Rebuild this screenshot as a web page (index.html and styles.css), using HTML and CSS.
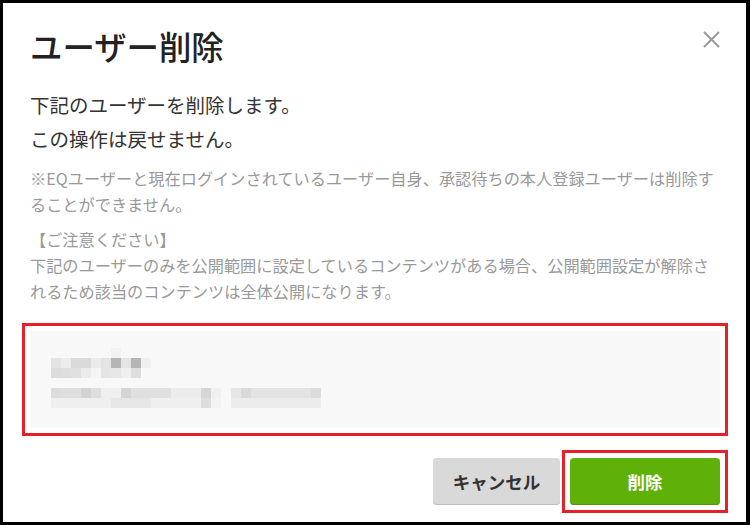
FILE: index.html
```html
<!DOCTYPE html>
<html lang="ja">
  <head>
    <meta charset="utf-8">
    <title>ユーザー削除</title>
    <link rel="stylesheet" href="styles.css">
  </head>
  <body>
    <div class="frame">
      <div class="dialog">
        <div class="dialog-header">
          <h1>ユーザー削除</h1>
          <button class="close-button" aria-label="閉じる">
            <svg width="17" height="17" viewBox="0 0 17 17">
              <path d="M1 1 L16 16 M16 1 L1 16" stroke="#9a9a9a" stroke-width="2" fill="none"/>
            </svg>
          </button>
        </div>

        <p class="lead">下記のユーザーを削除します。<br>この操作は戻せません。</p>

        <p class="note">※EQユーザーと現在ログインされているユーザー自身、承認待ちの本人登録ユーザーは削除することができません。</p>
        <p class="note note-caution">【ご注意ください】<br>下記のユーザーのみを公開範囲に設定しているコンテンツがある場合、公開範囲設定が解除されるため該当のコンテンツは全体公開になります。</p>

        <!-- user name / mail are mosaicked in the original -->
        <div class="user-list marked">
          <svg class="mosaic" width="270" height="60" viewBox="0 0 270 60" aria-hidden="true">
            <rect x="60" y="0" width="10" height="10" fill="#f2f2f2"/>

            <rect x="0" y="10" width="10" height="10" fill="#e4e4e4"/>
            <rect x="10" y="10" width="10" height="10" fill="#ececec"/>
            <rect x="20" y="10" width="20" height="10" fill="#dadada"/>
            <rect x="40" y="10" width="10" height="10" fill="#ebebeb"/>
            <rect x="50" y="10" width="10" height="10" fill="#e4e4e4"/>
            <rect x="60" y="10" width="10" height="10" fill="#b5b5b5"/>
            <rect x="70" y="10" width="10" height="10" fill="#e4e4e4"/>
            <rect x="80" y="10" width="10" height="10" fill="#b5b5b5"/>
            <rect x="90" y="10" width="10" height="10" fill="#f0f0f0"/>

            <rect x="0" y="20" width="10" height="10" fill="#dcdcdc"/>
            <rect x="10" y="20" width="10" height="10" fill="#dedede"/>
            <rect x="20" y="20" width="10" height="10" fill="#e0e0e0"/>
            <rect x="30" y="20" width="10" height="10" fill="#ebebeb"/>
            <rect x="40" y="20" width="10" height="10" fill="#f5f5f5"/>
            <rect x="50" y="20" width="10" height="10" fill="#e4e4e4"/>
            <rect x="60" y="20" width="10" height="10" fill="#e6e6e6"/>
            <rect x="70" y="20" width="10" height="10" fill="#efefef"/>
            <rect x="80" y="20" width="10" height="10" fill="#dedede"/>

            <rect x="0" y="40" width="10" height="10" fill="#dcdcdc"/>
            <rect x="10" y="40" width="20" height="10" fill="#dedede"/>
            <rect x="30" y="40" width="10" height="10" fill="#d3d3d3"/>
            <rect x="40" y="40" width="10" height="10" fill="#dedede"/>
            <rect x="50" y="40" width="20" height="10" fill="#efefef"/>
            <rect x="70" y="40" width="10" height="10" fill="#d5d5d5"/>
            <rect x="80" y="40" width="40" height="10" fill="#e0e0e0"/>
            <rect x="120" y="40" width="30" height="10" fill="#ececec"/>
            <rect x="150" y="40" width="10" height="10" fill="#d6d6d6"/>
            <rect x="160" y="40" width="10" height="10" fill="#f0f0f0"/>
            <rect x="180" y="40" width="10" height="10" fill="#e5e5e5"/>
            <rect x="190" y="40" width="10" height="10" fill="#dadada"/>
            <rect x="200" y="40" width="60" height="10" fill="#e3e3e3"/>
            <rect x="260" y="40" width="10" height="10" fill="#dcdcdc"/>

            <rect x="0" y="50" width="60" height="10" fill="#efefef"/>
            <rect x="60" y="50" width="40" height="10" fill="#e6e6e6"/>
            <rect x="100" y="50" width="50" height="10" fill="#efefef"/>
            <rect x="150" y="50" width="10" height="10" fill="#dddddd"/>
            <rect x="160" y="50" width="10" height="10" fill="#f3f3f3"/>
            <rect x="180" y="50" width="90" height="10" fill="#ececec"/>
          </svg>
        </div>

        <div class="actions">
          <button class="cancel-button">キャンセル</button>
          <button class="delete-button marked">削除</button>
        </div>
      </div>
    </div>
  </body>
</html>
```

FILE: styles.css
```css
* {
  box-sizing: border-box;
}

body {
  margin: 0;
  font-family: "Noto Sans CJK JP", "Noto Sans", sans-serif;
  background-color: #000;
}

.frame {
  width: 750px;
  height: 525px;
  border-style: solid;
  border-color: #000;
  border-width: 3px 4px 3px 3px;
  background-color: #fff;
}

.dialog {
  height: 100%;
  padding: 23px 26px 17px 27px;
  display: flex;
  flex-direction: column;
}

.dialog-header {
  display: flex;
  justify-content: space-between;
  align-items: flex-start;
}

.dialog-header h1 {
  margin: 0;
  font-size: 32.4px;
  line-height: 40px;
  font-weight: 500;
  color: #222;
}

.close-button {
  margin-top: 5px;
  padding: 0;
  width: 17px;
  height: 17px;
  border: none;
  background: none;
  cursor: pointer;
}

.close-button svg {
  display: block;
}

.lead {
  margin: 22px 0 0;
  font-size: 19.5px;
  line-height: 34px;
  color: #333;
}

.note {
  margin: 9px 0 0;
  font-size: 16.2px;
  line-height: 26px;
  color: #999;
}

.user-list {
  margin-top: 27px;
  padding: 17px 21px 20px;
  background-color: #f8f8f8;
}

.mosaic {
  display: block;
}

.actions {
  margin-top: auto;
  display: flex;
  justify-content: flex-end;
  gap: 10px;
}

.actions button {
  height: 47px;
  border: none;
  border-radius: 4px;
  font-family: inherit;
  font-size: 17.5px;
  font-weight: 700;
  cursor: pointer;
}

.cancel-button {
  width: 127px;
  background-color: #d9d9d9;
  color: #333;
  box-shadow: inset 0 -1px 0 #bdbdbd;
}

.delete-button {
  width: 150px;
  background-color: #5fb10a;
  color: #fff;
  box-shadow: inset 0 -1px 0 #4e9608;
}

/* red annotation boxes */
.marked {
  position: relative;
}

.marked::after {
  content: "";
  position: absolute;
  top: -8px;
  right: -8px;
  bottom: -8px;
  left: -8px;
  border: 3px solid #e61f29;
  pointer-events: none;
}
```
